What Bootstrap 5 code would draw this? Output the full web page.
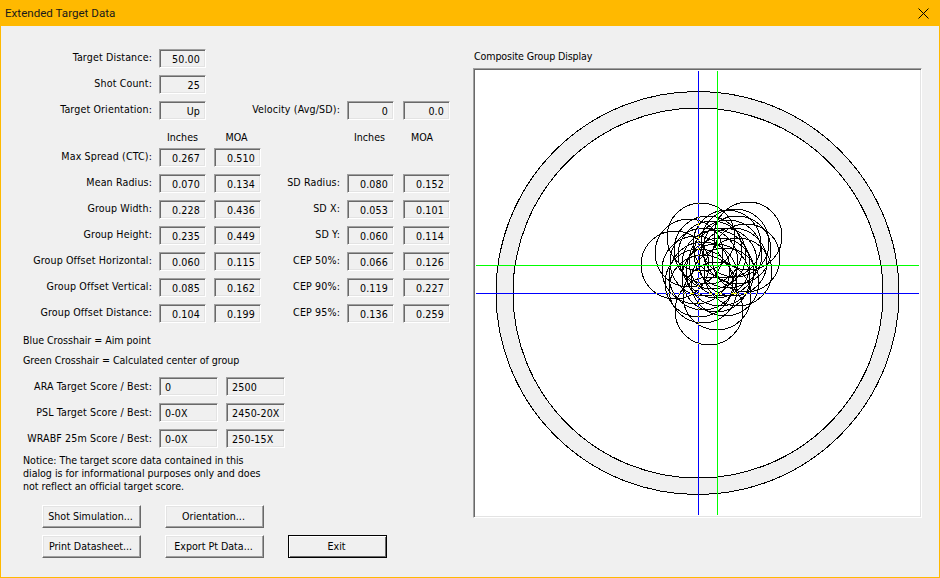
<!DOCTYPE html>
<html><head><meta charset="utf-8"><title>Extended Target Data</title>
<link href="https://cdn.jsdelivr.net/npm/bootstrap@5.3.0/dist/css/bootstrap.min.css" rel="stylesheet">
<style>
html,body{margin:0;height:578px;overflow:hidden;background:#f0f0f0}
body{font-family:"DejaVu Sans Condensed","DejaVu Sans",sans-serif;font-stretch:condensed;font-size:10.6px;line-height:13px;color:#000}
.dlg{width:940px;height:578px;border:1px solid #ffb900;border-top:0;background:#f0f0f0}
.dlg-title{height:26px;margin:0 -1px;padding:0 11px 0 5px;background:#ffb900;font-family:Roboto,sans-serif;font-stretch:normal;font-size:11.6px;color:#1a1a1a}
.dlg-main{height:551px}
.pane-l{width:472px;padding-top:23px}
.pane-r{width:449px;padding-top:23px}
.frow{height:19px;margin-bottom:7px}
.hrow{height:21px;padding-top:4px;margin-top:7px}
.lab{width:151px;text-align:right;margin-right:7px;margin-top:-3px;white-space:nowrap;flex:none;letter-spacing:.13px}
.lab2{width:79px;text-align:right;margin:-2px 7px 0 0;white-space:nowrap;flex:none;letter-spacing:.13px}
.vel{width:134px;margin:-3px 7px 0 0;white-space:nowrap;text-align:right;flex:none;letter-spacing:.15px}
.tbl .lab{margin-top:-2px}
.scr .lab{margin-top:-1px}
.fld{width:47px;height:19px;flex:none;padding:3px 5px 0 0;text-align:right;white-space:nowrap;letter-spacing:.15px;border:1px solid;border-color:#a0a0a0 #fff #fff #a0a0a0;box-shadow:inset 1px 1px #696969,inset -1px -1px #e3e3e3}
.fld-w{width:59px;text-align:left;padding-left:5px}
.fgap{margin-left:8px}
.fgap2{margin-left:9px}
.hd{width:47px;text-align:center;flex:none}
.hd-a{padding-right:2px}
.hd-b{padding-right:9px}
.hsp{width:86px;flex:none}
.note{padding-left:22px;letter-spacing:-.03px}
.mt-b{margin-top:11px}
.mt-g{margin-top:7px}
.mt-s{margin-top:10px}
.notice{margin:6px 0 12px}
.act{width:99px;height:23px;padding:0 2px 0 0;border-radius:0;font-size:10.6px;line-height:13px;color:#000;background:#f0f0f0;border:1px solid;border-color:#fff #696969 #696969 #fff;box-shadow:inset -1px -1px #a0a0a0,inset 1px 1px #e3e3e3;flex:none}
.act-def{border-color:#000;box-shadow:inset 1px 1px #fff,inset -1px -1px #696969}
.act-row{padding-left:41px;margin-bottom:7px}
.act-gap{margin-left:24px}
.cap{height:19px;padding:1px 0 0 1px;letter-spacing:-.12px}
.plot{display:block;width:449px;height:450px;padding:1px;border:1px solid;border-color:#a0a0a0 #fff #fff #a0a0a0;box-shadow:inset 1px 1px #696969,inset -1px -1px #e3e3e3;background:#fff}
.plot svg{display:block}
</style></head><body>
<div class="dlg">
<div class="dlg-title d-flex align-items-center justify-content-between"><span>Extended Target Data</span>
<svg width="11" height="11" viewBox="0 0 11 11"><path d="M.5.5l10 10M10.5.5l-10 10" stroke="#000" fill="none"/></svg></div>
<div class="dlg-main d-flex">
<div class="pane-l">
<div class="frow d-flex align-items-center"><div class="lab">Target Distance:</div><div class="fld">50.00</div></div>
<div class="frow d-flex align-items-center"><div class="lab">Shot Count:</div><div class="fld">25</div></div>
<div class="frow d-flex align-items-center mb-0"><div class="lab">Target Orientation:</div><div class="fld">Up</div><div class="vel">Velocity (Avg/SD):</div><div class="fld">0</div><div class="fld fgap2">0.0</div></div>
<div class="hrow d-flex"><div class="lab mt-0"></div><div class="hd">Inches</div><div class="hd hd-a fgap">MOA</div><div class="hsp"></div><div class="hd hd-a">Inches</div><div class="hd hd-b fgap2">MOA</div></div>
<div class="tbl">
<div class="frow d-flex align-items-center"><div class="lab">Max Spread (CTC):</div><div class="fld">0.267</div><div class="fld fgap">0.510</div></div>
<div class="frow d-flex align-items-center"><div class="lab">Mean Radius:</div><div class="fld">0.070</div><div class="fld fgap">0.134</div><div class="lab2">SD Radius:</div><div class="fld">0.080</div><div class="fld fgap2">0.152</div></div>
<div class="frow d-flex align-items-center"><div class="lab">Group Width:</div><div class="fld">0.228</div><div class="fld fgap">0.436</div><div class="lab2">SD X:</div><div class="fld">0.053</div><div class="fld fgap2">0.101</div></div>
<div class="frow d-flex align-items-center"><div class="lab">Group Height:</div><div class="fld">0.235</div><div class="fld fgap">0.449</div><div class="lab2">SD Y:</div><div class="fld">0.060</div><div class="fld fgap2">0.114</div></div>
<div class="frow d-flex align-items-center"><div class="lab">Group Offset Horizontal:</div><div class="fld">0.060</div><div class="fld fgap">0.115</div><div class="lab2">CEP 50%:</div><div class="fld">0.066</div><div class="fld fgap2">0.126</div></div>
<div class="frow d-flex align-items-center"><div class="lab">Group Offset Vertical:</div><div class="fld">0.085</div><div class="fld fgap">0.162</div><div class="lab2">CEP 90%:</div><div class="fld">0.119</div><div class="fld fgap2">0.227</div></div>
<div class="frow d-flex align-items-center mb-0"><div class="lab">Group Offset Distance:</div><div class="fld">0.104</div><div class="fld fgap">0.199</div><div class="lab2">CEP 95%:</div><div class="fld">0.136</div><div class="fld fgap2">0.259</div></div>
</div>
<div class="note mt-b">Blue Crosshair = Aim point</div>
<div class="note mt-g">Green Crosshair = Calculated center of group</div>
<div class="scr mt-s">
<div class="frow d-flex align-items-center"><div class="lab">ARA Target Score / Best:</div><div class="fld fld-w">0</div><div class="fld fld-w fgap">2500</div></div>
<div class="frow d-flex align-items-center"><div class="lab">PSL Target Score / Best:</div><div class="fld fld-w">0-0X</div><div class="fld fld-w fgap">2450-20X</div></div>
<div class="frow d-flex align-items-center mb-0"><div class="lab">WRABF 25m Score / Best:</div><div class="fld fld-w">0-0X</div><div class="fld fld-w fgap">250-15X</div></div>
</div>
<div class="note notice">Notice: The target score data contained in this<br>dialog is for informational purposes only and does<br>not reflect an official target score.</div>
<div class="act-row d-flex"><button type="button" class="btn act">Shot Simulation...</button><button type="button" class="btn act act-gap">Orientation...</button></div>
<div class="act-row d-flex"><button type="button" class="btn act">Print Datasheet...</button><button type="button" class="btn act act-gap">Export Pt Data...</button><button type="button" class="btn act act-def act-gap">Exit</button></div>
</div>
<div class="pane-r">
<div class="cap">Composite Group Display</div>
<div class="plot"><svg width="445" height="446" viewBox="475 70 445 446" shape-rendering="crispEdges">
<defs><clipPath id="xb"><rect x="698" y="70" width="1" height="446"/><rect x="475" y="293" width="445" height="1"/></clipPath>
<g id="shots" fill="none">
<circle cx="675" cy="265" r="34"/><circle cx="689" cy="253" r="34"/><circle cx="701" cy="237" r="34"/><circle cx="748" cy="236" r="34"/><circle cx="709" cy="311" r="34"/>
<circle cx="717" cy="296" r="34"/><circle cx="703" cy="289" r="34"/><circle cx="746" cy="258" r="34"/><circle cx="738" cy="272" r="34"/><circle cx="735" cy="243" r="34"/>
<circle cx="727" cy="244" r="34"/><circle cx="708" cy="250" r="34"/><circle cx="696" cy="270" r="34"/><circle cx="703" cy="276" r="34"/><circle cx="716" cy="264" r="34"/>
<circle cx="725" cy="282" r="34"/><circle cx="733" cy="262" r="34"/><circle cx="712" cy="255" r="34"/><circle cx="720" cy="272" r="34"/><circle cx="704" cy="262" r="34"/>
<circle cx="728" cy="254" r="34"/><circle cx="716" cy="278" r="34"/><circle cx="737" cy="250" r="34"/><circle cx="699" cy="283" r="34"/><circle cx="723" cy="262" r="34"/>
</g></defs>
<circle cx="697.5" cy="293" r="201.5" fill="#f0f0f0" stroke="#000"/><circle cx="698" cy="293" r="185" fill="#fff" stroke="#000"/>
<use href="#shots" stroke="#000"/>
<path d="M698.5 71V515M476 293.5H919" stroke="#00f" fill="none"/>
<path d="M717.5 71V515M476 265.5H919" stroke="#0f0" fill="none"/>
<g clip-path="url(#xb)"><use href="#shots" stroke="#ff0"/></g>
</svg></div>
</div>
</div>
</div>
</body>
</html>
